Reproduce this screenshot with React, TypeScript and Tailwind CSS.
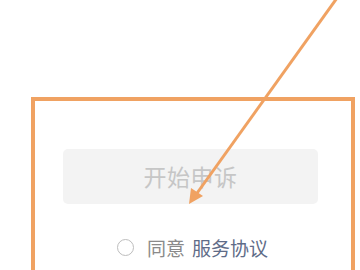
import React from "react";

const ORANGE = "#f0a262";

export default function App() {
  return (
    <div
      className="relative w-[360px] h-[270px] overflow-hidden bg-white"
      style={{ fontFamily: '"Noto Sans CJK SC", "Noto Sans", sans-serif' }}
    >
      <div className="flex flex-col items-start pt-[149px]">
        <button className="ml-[63px] w-[255px] h-[55px] rounded-[5px] bg-[#f3f3f3] text-[23px] leading-none text-[#c6c6c6] tracking-[0.5px]">
          开始申诉
        </button>
        <div className="mt-[34px] ml-[117px] flex items-center gap-[13px]">
          <span className="w-[17px] h-[17px] rounded-full border-[1.5px] border-[#bdbdbd]" />
          <span className="text-[19px] leading-none">
            <span className="text-[#8a8a8a]">同意</span>
            <span className="ml-[7px] text-[#5f6c88]">服务协议</span>
          </span>
        </div>
      </div>

      {/* annotation box */}
      <div className="absolute left-[31px] top-[97px] w-[324px] h-[200px] border-[4px] border-[#f0a262]" />

      {/* annotation arrow */}
      <svg className="absolute inset-0" width="360" height="270" viewBox="0 0 360 270">
        <line x1="337" y1="-2" x2="195" y2="196" stroke={ORANGE} strokeWidth="3" />
        <polygon points="189,204 203,196 191,188" fill={ORANGE} />
      </svg>
    </div>
  );
}
